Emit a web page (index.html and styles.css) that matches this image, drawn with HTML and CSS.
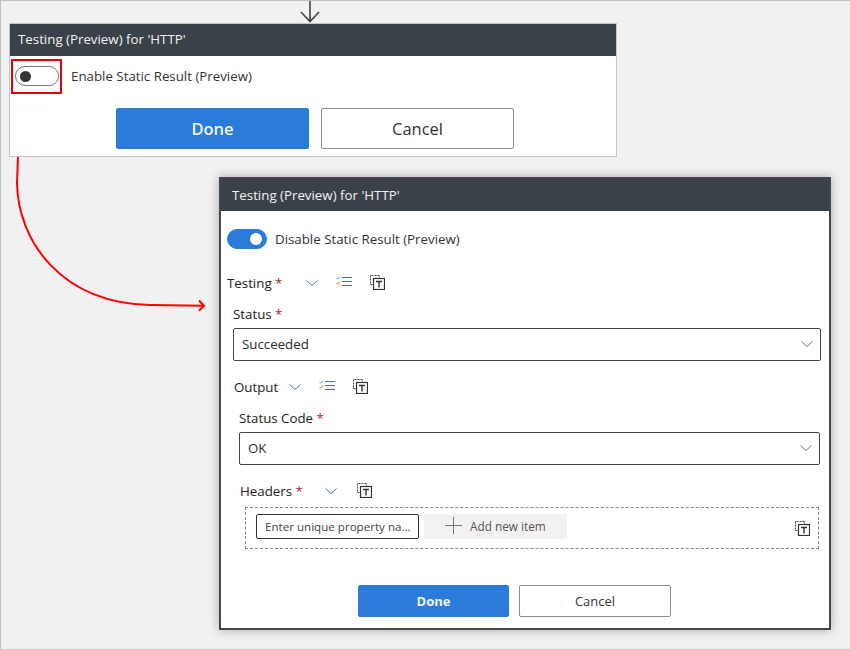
FILE: index.html

```html
<!DOCTYPE html>
<html>
<head>
	<title>Testing (Preview)</title>
	<meta charset="UTF-8">
	<link rel="stylesheet" href="styles.css">
</head>
<body>
	<svg width="0" height="0" class="defs">
		<symbol id="chev" viewBox="0 0 12 6">
			<path d="M.5 .5L6 5.500 11.500 .5" fill="none" stroke="currentColor" stroke-width="1"/>
		</symbol>
		<symbol id="checklist" viewBox="0 0 16 12">
			<path d="M.5 2l1.200 1.200L4 .5M.5 7l1.200 1.200L4 5.500" fill="none" stroke="#4f9ae8" stroke-width="1"/>
			<path d="M6 1h10v1H6zM6 5h10v1H6zM6 9h10v1H6z" fill="#1f78dc"/>
		</symbol>
		<symbol id="paramicon" viewBox="0 0 16 16">
			<path d="M3.500 10.500H1.500V1.500H10.500V3.500" fill="none" stroke="#444" stroke-width="1" stroke-dasharray="2 1"/>
			<rect x="4.500" y="4.500" width="11" height="11" fill="#fff" stroke="#333" stroke-width="1.200"/>
			<path d="M7 7.500h6M10 7.500v6" fill="none" stroke="#333" stroke-width="1.400"/>
		</symbol>
	</svg>

	<div id="canvas">
		<svg class="overlay" width="850" height="650">
			<path d="M310 0v21.500M301 12l9 9.500 9-9.500" fill="none" stroke="#444" stroke-width="1.600"/>
			<path d="M18 157L17 183C18 240 60 303 150 305L204 305.700M199 300.500l5 5.200-5 5.200" fill="none" stroke="#f00" stroke-width="2"/>
		</svg>

		<div class="win win-small">
			<div class="win-head">Testing (Preview) for 'HTTP'</div>
			<div class="toggle-row-small">
				<div class="redbox"><span class="toggle"></span></div>
				<span class="toggle-text">Enable Static Result (Preview)</span>
			</div>
			<div class="btns btns-big">
				<button class="btn primary">Done</button>
				<button class="btn">Cancel</button>
			</div>
		</div>

		<div class="win win-large">
			<div class="win-head">Testing (Preview) for 'HTTP'</div>
			<div class="win-body">
				<div class="toggle-row">
					<span class="toggle on"></span>
					<span class="toggle-text">Disable Static Result (Preview)</span>
				</div>

				<div class="section-row testing">
					<span class="sec-label">Testing <b>*</b></span>
					<svg class="chev blue"><use href="#chev"/></svg>
					<svg class="list"><use href="#checklist"/></svg>
					<svg class="param"><use href="#paramicon"/></svg>
				</div>

				<div class="field status">
					<label>Status <b>*</b></label>
					<div class="select">Succeeded <svg class="chev"><use href="#chev"/></svg></div>
				</div>

				<div class="section-row output">
					<span class="sec-label">Output</span>
					<svg class="chev blue"><use href="#chev"/></svg>
					<svg class="list"><use href="#checklist"/></svg>
					<svg class="param"><use href="#paramicon"/></svg>
				</div>

				<div class="field code">
					<label>Status Code <b>*</b></label>
					<div class="select">OK <svg class="chev"><use href="#chev"/></svg></div>
				</div>

				<div class="section-row headers">
					<span class="sec-label">Headers <b>*</b></span>
					<svg class="chev blue"><use href="#chev"/></svg>
					<svg class="param"><use href="#paramicon"/></svg>
				</div>

				<div class="dashed">
					<div class="prop-input">Enter unique property na...</div>
					<div class="add-item">
						<svg width="17" height="17" viewBox="0 0 17 17"><path d="M8.500 0v17M0 8.500h17" stroke="#777" stroke-width="1"/></svg>
						<span>Add new item</span>
					</div>
					<svg class="param end"><use href="#paramicon"/></svg>
				</div>
			</div>
			<div class="btns btns-small">
				<button class="btn primary">Done</button>
				<button class="btn">Cancel</button>
			</div>
		</div>
	</div>
</body>
</html>
```

FILE: styles.css

```css
* {
	box-sizing: border-box;
}

body {
	margin: 0;
	font: 13.3px "Open Sans", "Noto Sans", Arial, sans-serif;
	color: #2b2b2b;
}

.defs {
	display: block;
	height: 0;
}

#canvas {
	position: relative;
	width: 850px;
	height: 650px;
	background: #f1f1f1;
	border-top: 1px solid #c0c0c0;
	border-left: 1px solid #c0c0c0;
	border-bottom: 1px solid #c0c0c0;
	overflow: hidden;
}

.overlay {
	position: absolute;
	left: -1px;
	top: -1px;
}

.win {
	position: absolute;
	background: #fff;
}

.win-small {
	left: 8px;
	top: 22px;
	width: 608px;
	height: 134px;
	border: 1px solid #c4c4c4;
}

.win-large {
	left: 218px;
	top: 176px;
	width: 612px;
	height: 453px;
	border: 2px solid #43474c;
	box-shadow: 0 0 10px rgba(0, 0, 0, .3);
}

.win-head {
	height: 32px;
	background: #3b4148;
	color: #f2f2f2;
	padding-left: 8px;
	line-height: 31px;
}

.win-large .win-head {
	padding-left: 11px;
	line-height: 33px;
}

.toggle-row-small {
	display: flex;
	align-items: center;
	padding: 3px 0 0 1px;
}

.toggle-row-small .toggle-text {
	margin-bottom: 2px;
}

.redbox {
	width: 51px;
	height: 35px;
	border: 2px solid #e60000;
	padding: 5px 0 0 2px;
}

.toggle-text {
	margin-left: 9px;
	color: #333;
}

.toggle {
	display: flex;
	align-items: center;
	width: 44px;
	height: 20px;
	border: 1px solid #777;
	border-radius: 10px;
	padding: 0 4px;
	background: #fff;
}

.toggle::after {
	content: "";
	width: 11px;
	height: 11px;
	border-radius: 50%;
	background: #333;
}

.toggle.on {
	width: 40px;
	border-color: #2b7cd9;
	background: #2b7cd9;
	justify-content: flex-end;
}

.toggle.on::after {
	width: 12px;
	height: 12px;
	background: #fff;
}

.btns {
	display: flex;
	gap: 12px;
}

.btns-big {
	margin: 14px 0 0 106px;
}

.btns-big .btn {
	width: 193px;
	height: 41px;
	font-size: 16.500px;
	font-weight: 500;
}

.btns-big .primary {
	font-weight: 600;
}

.btns-small {
	margin: 0 0 0 137px;
	gap: 10px;
}

.btns-small .btn {
	width: 151px;
	height: 32px;
	font-size: 13px;
}

.btns-small .btn:last-child {
	width: 152px;
}

.btns-small .primary {
	font-weight: 700;
}

.btn {
	font-family: inherit;
	background: #fff;
	color: #333;
	border: 1.500px solid #8f8f8f;
	border-radius: 2px;
	padding: 0;
}

.btn.primary {
	background: #2b7cd9;
	border-color: #2b7cd9;
	color: #f2f7fd;
}

.win-body {
	height: 374px;
	padding: 18px 0 0 6px;
}

.toggle-row {
	display: flex;
	align-items: center;
	height: 20px;
}

.toggle-row .toggle-text {
	margin-left: 8px;
}

.section-row {
	display: flex;
	align-items: center;
	height: 20px;
	color: #222;
}

.sec-label {
	font-weight: 500;
}

b {
	color: #a4262c;
	font-weight: 400;
}

.testing {
	margin-top: 24px;
}

.testing .sec-label {
	width: 79px;
}

.output {
	margin: 16px 0 0 7px;
}

.output .sec-label {
	width: 55px;
}

.headers {
	margin: 16px 0 0 13px;
}

.headers .sec-label {
	width: 85px;
}

.chev {
	width: 12px;
	height: 6px;
	color: #777;
}

.chev.blue {
	color: #2b7cd9;
}

.list {
	width: 16px;
	height: 12px;
	margin: 0 0 2px 18px;
}

.param {
	width: 16px;
	height: 16px;
	margin: 0 0 2px 17px;
}

.headers .param {
	margin-left: 19px;
}

.field label {
	display: block;
	line-height: 16px;
	color: #222;
	font-weight: 500;
}

.status {
	margin: 13px 0 0 6px;
	width: 588px;
}

.code {
	margin: 13px 0 0 12px;
	width: 581px;
}

.select {
	display: flex;
	align-items: center;
	justify-content: space-between;
	height: 33px;
	margin-top: 6px;
	padding: 0 7px 2px 8px;
	border: 1.500px solid #444;
	border-radius: 2px;
}

.dashed {
	display: flex;
	align-items: center;
	width: 574px;
	height: 42px;
	margin: 6px 0 0 18px;
	padding-left: 10px;
	border: 1px dashed #8a8a8a;
}

.prop-input {
	align-self: flex-start;
	width: 163px;
	height: 25px;
	margin-top: 6px;
	padding-left: 8px;
	line-height: 23px;
	font-size: 11.600px;
	white-space: nowrap;
	overflow: hidden;
	color: #444;
	border: 1px solid #333;
	border-radius: 2px;
}

.add-item {
	display: flex;
	align-items: center;
	align-self: flex-start;
	gap: 8px;
	width: 143px;
	height: 25px;
	margin: 6px 0 0 5px;
	padding: 0 0 2px 21px;
	font-size: 11.800px;
	background: #f3f2f1;
	color: #555;
}

.param.end {
	margin: 0 8px 0 auto;
}
```
